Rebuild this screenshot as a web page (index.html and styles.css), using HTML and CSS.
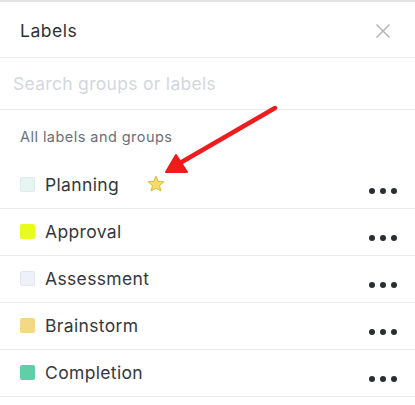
FILE: index.html
```html
<!DOCTYPE html>
<html>
<head>
<meta charset="utf-8">
<link rel="stylesheet" href="styles.css">
</head>
<body>
<div class="panel">
  <div class="header">
    <span class="title">Labels</span>
    <svg class="close" width="16" height="16" viewBox="0 0 16 16"><path d="M1.5 1.5 L14.5 14.5 M14.5 1.5 L1.5 14.5" stroke="#b4b8bd" stroke-width="1.6" fill="none"/></svg>
  </div>
  <div class="search"><span class="placeholder">Search groups or labels</span></div>
  <div class="section-title">All labels and groups</div>
  <ul class="list">
    <li class="row"><span class="swatch sw-planning"></span><span class="name">Planning</span>
      <svg class="star" width="18" height="17" viewBox="0 0 24 23"><path d="M12 1.5 L15 8.6 L22.6 9.2 L16.8 14.2 L18.6 21.6 L12 17.6 L5.4 21.6 L7.2 14.2 L1.4 9.2 L9 8.6 Z" fill="#f7dc6a" stroke="#d9b43a" stroke-width="1.3" stroke-linejoin="round"/></svg>
      <span class="more"><i></i><i></i><i></i></span></li>
    <li class="row"><span class="swatch sw-approval"></span><span class="name">Approval</span><span class="more"><i></i><i></i><i></i></span></li>
    <li class="row"><span class="swatch sw-assessment"></span><span class="name">Assessment</span><span class="more"><i></i><i></i><i></i></span></li>
    <li class="row"><span class="swatch sw-brainstorm"></span><span class="name">Brainstorm</span><span class="more"><i></i><i></i><i></i></span></li>
    <li class="row"><span class="swatch sw-completion"></span><span class="name">Completion</span><span class="more"><i></i><i></i><i></i></span></li>
  </ul>
  <svg class="arrow" width="415" height="405" viewBox="0 0 415 405"><line x1="275" y1="108" x2="180" y2="163" stroke="#ee1c1c" stroke-width="4.5" stroke-linecap="round"/><path d="M166 172 L176 155 L187 172 Z" fill="#ee1c1c" stroke="#ee1c1c" stroke-width="2" stroke-linejoin="round"/></svg>
</div>
</body>
</html>
```
FILE: styles.css
```css
* { box-sizing: border-box; }
html, body { margin: 0; padding: 0; background: #fff; }
body { font-family: Inter, "Noto Sans", sans-serif; width: 415px; height: 405px; overflow: hidden; }
.panel { position: relative; border-top: 2px solid #e4e4e4; }
.header { height: 56px; display: flex; align-items: center; justify-content: space-between; padding: 2px 24px 0 20px; border-bottom: 1px solid #ebebeb; }
.title { font-size: 17.5px; letter-spacing: 0.5px; color: #2f3337; }
.close { display: block; }
.search { height: 52px; display: flex; align-items: center; padding-left: 13px; border-bottom: 1px solid #ebebeb; }
.placeholder { font-size: 17.5px; letter-spacing: 0.3px; color: #d3d7dd; }
.section-title { height: 53px; display: flex; align-items: center; padding-left: 20px; font-size: 14.5px; letter-spacing: 0.45px; color: #6b7078; }
.list { list-style: none; margin: 0; padding: 0; }
.row { height: 47px; display: flex; align-items: center; padding-left: 20px; padding-bottom: 2px; border-bottom: 1px solid #ebebeb; }
.row:first-child { height: 46px; }
.swatch { width: 15px; height: 15px; border-radius: 2px; flex: none; margin-right: 10px; }
.sw-planning { background: #e6f5f1; border: 1px solid #dcebe7; }
.sw-approval { background: #e8fc1c; }
.sw-assessment { background: #eef0fa; border: 1px solid #e3e6f0; }
.sw-brainstorm { background: #f3d985; }
.sw-completion { background: #5ecfa6; }
.name { font-size: 17.5px; letter-spacing: 0.35px; color: #34383d; }
.star { margin-left: 28px; margin-top: -2px; }
.more { margin-left: auto; margin-right: 18px; display: flex; gap: 5px; margin-top: 13px; }
.more i { width: 6px; height: 6px; border-radius: 50%; background: #2a2d31; display: block; }
.arrow { position: absolute; left: 0; top: -2px; pointer-events: none; }
```
